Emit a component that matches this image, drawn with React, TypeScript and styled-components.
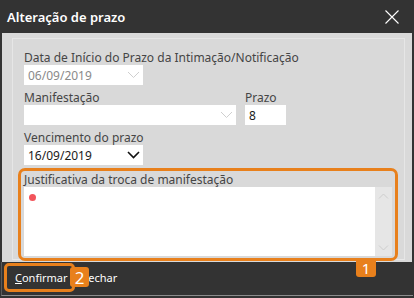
import React from "react";
import styled, { createGlobalStyle } from "styled-components";

const GlobalStyle = createGlobalStyle`
  html, body {
    margin: 0;
    padding: 0;
    background: #2e2e2e;
  }
  * {
    box-sizing: border-box;
  }
`;

const Window = styled.div`
  width: 414px;
  height: 298px;
  background: #333333;
  display: flex;
  flex-direction: column;
  font-family: "Noto Sans", "Open Sans", sans-serif;
  overflow: hidden;
`;

const TitleBar = styled.div`
  height: 33px;
  flex: none;
  display: flex;
  align-items: center;
  justify-content: space-between;
  padding: 0 15px 0 7px;
  color: #ffffff;
  font-size: 13px;
  font-weight: 600;
`;

const Body = styled.div`
  margin: 0 2px;
  height: 229px;
  flex: none;
  background: #d9d9d9;
  padding: 5px 7px 2px 10px;
  display: flex;
`;

const Panel = styled.div`
  flex: 1;
  border: 1px solid #e6e6e6;
  border-bottom-color: #e9e9e9;
  padding: 12px 11px 0 11px;
  display: flex;
  flex-direction: column;
  gap: 6px;
`;

const Row = styled.div`
  display: flex;
  gap: 9px;
`;

const Field = styled.div`
  display: flex;
  flex-direction: column;
`;

const Label = styled.div`
  font-size: 12px;
  line-height: 14px;
  height: 14px;
  color: #454545;
  white-space: nowrap;
`;

const Input = styled.div<{ $width: number; $muted?: boolean }>`
  width: ${(p) => p.$width}px;
  height: 20px;
  background: #ffffff;
  display: flex;
  align-items: center;
  justify-content: space-between;
  padding: 0 3px 0 4px;
  font-size: 12px;
  color: ${(p) => (p.$muted ? "#8a8a8a" : "#1a1a1a")};
`;

const Justif = styled.div`
  position: relative;
  margin-top: 2px;
  margin-right: 1px;
  display: flex;
  flex-direction: column;
`;

const JustifLabel = styled.div`
  font-size: 12px;
  line-height: 14px;
  color: #454545;
`;

const TextArea = styled.div`
  height: 69px;
  background: #ffffff;
  display: flex;
  justify-content: space-between;
  padding: 6px 0 0 5px;
`;

const RedDot = styled.span`
  width: 7px;
  height: 7px;
  border-radius: 50%;
  background: #f2545b;
  margin-top: 1px;
`;

const ScrollBar = styled.div`
  width: 17px;
  margin-top: -6px;
  background: #e6e6e6;
  display: flex;
  flex-direction: column;
  justify-content: space-between;
  align-items: center;
  padding: 6px 0 5px;
`;

const Highlight = styled.div`
  position: absolute;
  top: -5px;
  left: -6px;
  right: -6px;
  bottom: -5px;
  border: 3px solid #e8801c;
  border-radius: 7px;
  pointer-events: none;
`;

const Badge = styled.div<{ $size: number }>`
  background: #e8801c;
  color: #ffffff;
  font-size: ${(p) => p.$size}px;
  display: flex;
  align-items: center;
  justify-content: center;
  border-radius: 3px;
`;

const BadgeOne = styled(Badge)`
  position: absolute;
  top: 100%;
  right: 19px;
  width: 20px;
  height: 19px;
  border-radius: 0 0 3px 3px;
`;

const Footer = styled.div`
  flex: 1;
  margin: 0 1px 2px 1px;
  border-bottom: 1px solid #8c8c8c;
  border-left: 1px solid #5a5a5a;
  position: relative;
  display: flex;
  align-items: center;
  padding: 0 0 2px 2px;
`;

const Button = styled.div<{ $active?: boolean }>`
  height: 29px;
  display: flex;
  align-items: center;
  padding: 0 4px 0 ${(p) => (p.$active ? 8 : 5)}px;
  font-size: 11px;
  color: #ffffff;
  border: 3px solid ${(p) => (p.$active ? "#e8801c" : "transparent")};
  border-radius: 5px;
`;

const BadgeTwo = styled(Badge)`
  position: absolute;
  left: 68px;
  top: 5px;
  width: 19px;
  height: 20px;
`;

const Chevron = ({ color, width = 1 }: { color: string; width?: number }) => (
  <svg width="13" height="8" viewBox="0 0 13 8">
    <polyline points="1,1 6.5,6.5 12,1" fill="none" stroke={color} strokeWidth={width} />
  </svg>
);

const SmallChevron = ({ up }: { up?: boolean }) => (
  <svg width="11" height="6" viewBox="0 0 11 6">
    <polyline
      points={up ? "1,5.5 5.5,1 10,5.5" : "1,0.5 5.5,5 10,0.5"}
      fill="none"
      stroke="#cdcdcd"
      strokeWidth="1"
    />
  </svg>
);

export default function App() {
  return (
    <>
      <GlobalStyle />
      <Window>
        <TitleBar>
          <span>Alteração de prazo</span>
          <svg width="14" height="14" viewBox="0 0 14 14">
            <path d="M0.5 0.5 L13.5 13.5 M13.5 0.5 L0.5 13.5" stroke="#ffffff" strokeWidth="1.1" />
          </svg>
        </TitleBar>
        <Body>
          <Panel>
            <Field>
              <Label>Data de Início do Prazo da Intimação/Notificação</Label>
              <Input $width={119} $muted>
                06/09/2019
                <Chevron color="#cfcfcf" />
              </Input>
            </Field>
            <Row>
              <Field>
                <Label>Manifestação</Label>
                <Input $width={212}>
                  <span />
                  <Chevron color="#cfcfcf" />
                </Input>
              </Field>
              <Field>
                <Label>Prazo</Label>
                <Input $width={41}>8</Input>
              </Field>
            </Row>
            <Field>
              <Label>Vencimento do prazo</Label>
              <Input $width={119}>
                16/09/2019
                <Chevron color="#111111" width={1.6} />
              </Input>
            </Field>
            <Justif>
              <JustifLabel>Justificativa da troca de manifestação</JustifLabel>
              <TextArea>
                <RedDot />
                <ScrollBar>
                  <SmallChevron up />
                  <SmallChevron />
                </ScrollBar>
              </TextArea>
              <Highlight>
                <BadgeOne $size={15}>1</BadgeOne>
              </Highlight>
            </Justif>
          </Panel>
        </Body>
        <Footer>
          <Button $active>
            <span>
              <u>C</u>onfirmar
            </span>
          </Button>
          <Button>Fechar</Button>
          <BadgeTwo $size={17}>2</BadgeTwo>
        </Footer>
      </Window>
    </>
  );
}
